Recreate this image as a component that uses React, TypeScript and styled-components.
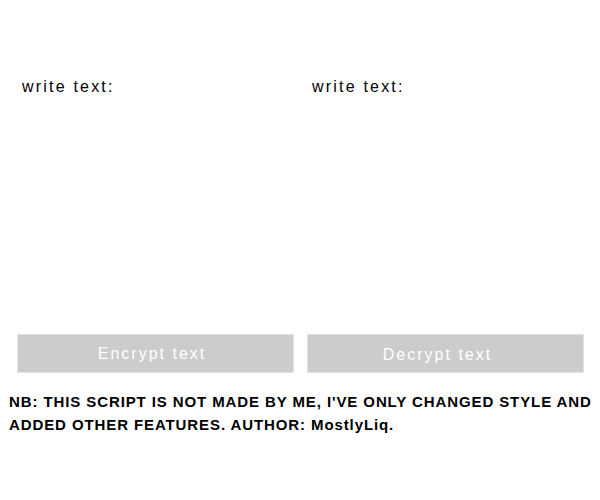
import React from "react";
import styled, { createGlobalStyle } from "styled-components";

const Global = createGlobalStyle`
  html, body { margin: 0; padding: 0; background: #ffffff; }
  body { font-family: "Liberation Sans", Arial, sans-serif; color: #000; }
`;

const Page = styled.main`
  width: 600px;
  display: flex;
  flex-direction: column;
`;

const Columns = styled.section`
  display: grid;
  grid-template-columns: 277px 277px;
  column-gap: 13px;
  padding: 78px 0 0 17px;
`;

const Column = styled.div`
  display: flex;
  flex-direction: column;
`;

const Label = styled.label`
  display: block;
  padding-left: 5px;
  font-size: 16px;
  line-height: 18px;
  letter-spacing: 2.2px;
  color: #000;
`;

const TextArea = styled.textarea`
  display: block;
  height: 234px;
  margin: 0 0 4px 0;
  padding: 0;
  border: none;
  outline: none;
  resize: none;
  background: transparent;
  font-family: "Liberation Sans", Arial, sans-serif;
`;

const Button = styled.button<{ $drop?: number; $shift?: number }>`
  display: flex;
  align-items: center;
  justify-content: center;
  box-sizing: border-box;
  width: 277px;
  height: 39px;
  margin: 0;
  padding: ${(p) => `${p.$drop ?? 0}px ${(p.$shift ?? 0) * 2}px 0 0`};
  background: #cccccc;
  border: 1px solid #e4e4e4;
  color: #ffffff;
  font-family: "Liberation Sans", Arial, sans-serif;
  font-size: 16px;
  line-height: 18px;
  letter-spacing: 2px;
  cursor: pointer;
`;

const Note = styled.p`
  margin: 17px 0 0 0;
  padding-left: 9px;
  font-size: 15px;
  line-height: 23px;
  font-weight: bold;
  letter-spacing: 0.9px;
  color: #000;
`;

export default function App() {
  return (
    <>
      <Global />
      <Page>
        <Columns>
          <Column>
            <Label>write text:</Label>
            <TextArea />
            <Button $shift={3.5}>Encrypt text</Button>
          </Column>
          <Column>
            <Label>write text:</Label>
            <TextArea />
            <Button $drop={3} $shift={8}>Decrypt text</Button>
          </Column>
        </Columns>
        <Note>
          NB: THIS SCRIPT IS NOT MADE BY ME, I'VE ONLY CHANGED STYLE AND
          ADDED OTHER FEATURES. AUTHOR: MostlyLiq.
        </Note>
      </Page>
    </>
  );
}
